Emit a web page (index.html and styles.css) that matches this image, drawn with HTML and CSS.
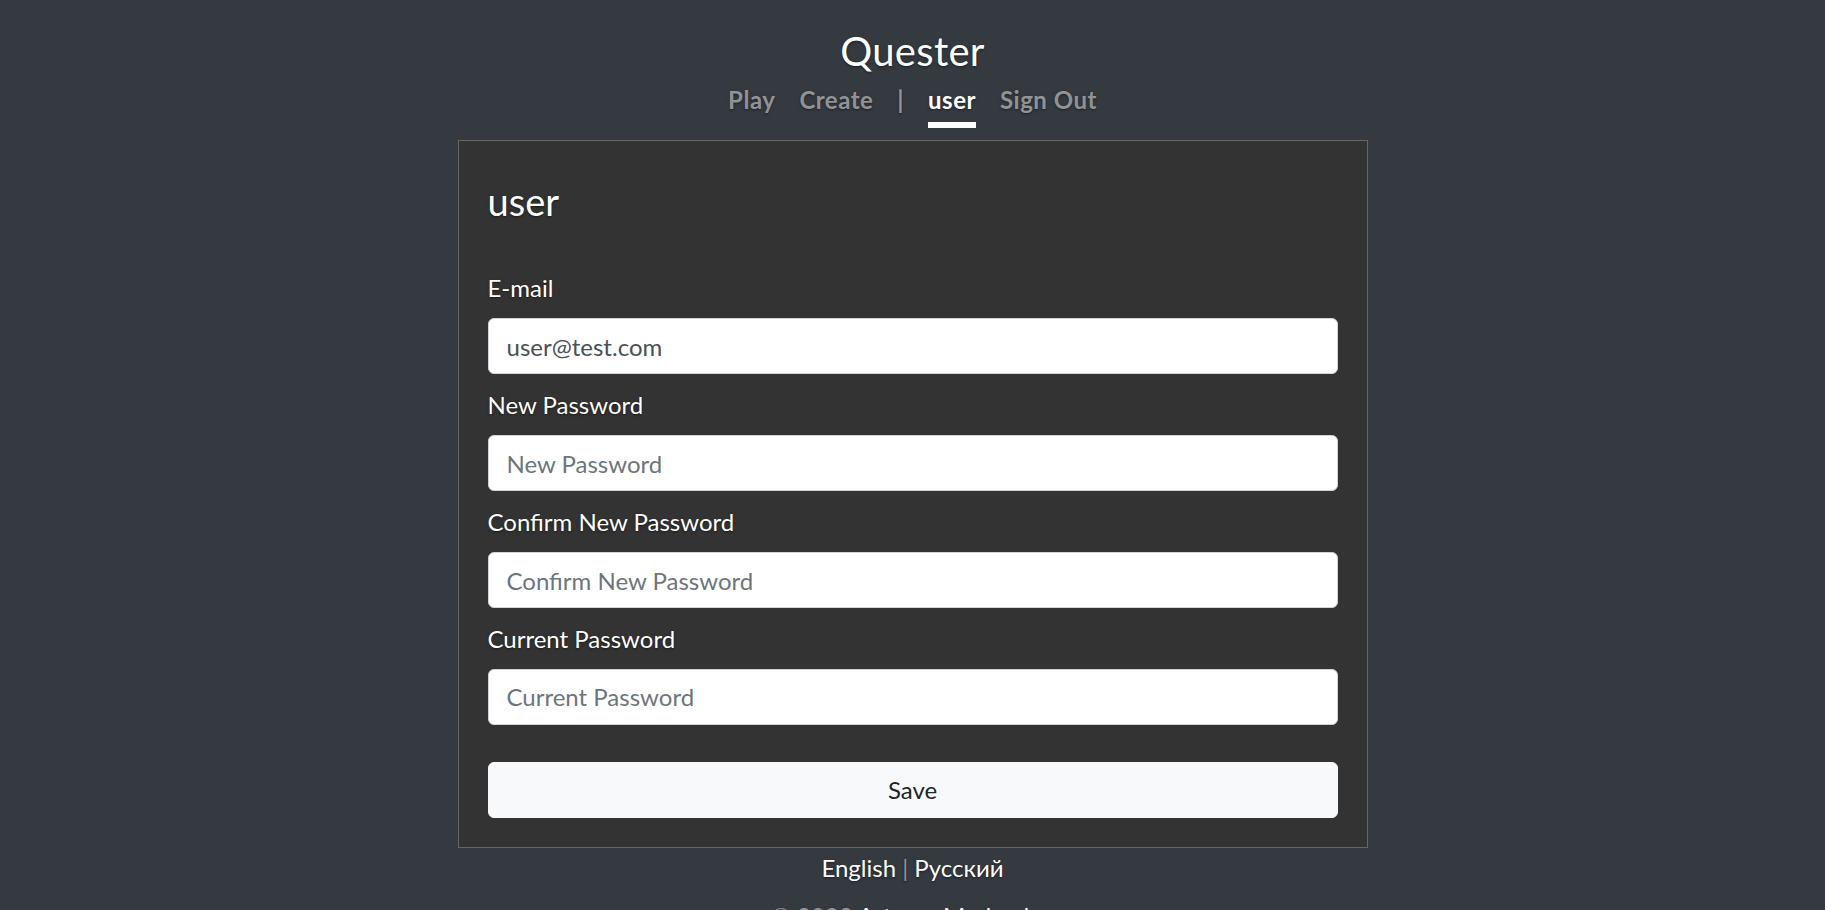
FILE: index.html
```html
<!DOCTYPE html>
<html lang="en">
<head>
<meta charset="utf-8">
<title>Quester</title>
<link rel="stylesheet" href="styles.css">
</head>
<body>
<div class="cover">
  <header class="masthead">
    <h1 class="brand">Quester</h1>
    <nav class="nav">
      <a class="nav-link" href="#">Play</a>
      <a class="nav-link" href="#">Create</a>
      <span class="nav-link sep">|</span>
      <a class="nav-link active" href="#">user</a>
      <a class="nav-link" href="#">Sign Out</a>
    </nav>
  </header>
  <main class="card">
    <h2 class="card-title">user</h2>
    <form class="form">
      <div class="group">
        <label class="label" for="email">E-mail</label>
        <input class="control" id="email" type="email" value="user@test.com">
      </div>
      <div class="group">
        <label class="label" for="newpw">New Password</label>
        <input class="control" id="newpw" type="password" placeholder="New Password">
      </div>
      <div class="group">
        <label class="label" for="confpw">Confirm New Password</label>
        <input class="control" id="confpw" type="password" placeholder="Confirm New Password">
      </div>
      <div class="group">
        <label class="label" for="curpw">Current Password</label>
        <input class="control" id="curpw" type="password" placeholder="Current Password">
      </div>
      <button class="btn" type="button">Save</button>
    </form>
  </main>
  <footer class="footer">
    <p class="lang"><a href="#">English</a> <span class="bar">|</span> <a href="#">Русский</a></p>
    <p class="copy"><span class="muted">© 2023</span> <a href="#">Artyom Medvedev</a></p>
  </footer>
</div>
</body>
</html>
```

FILE: styles.css
```css
html, body {
  margin: 0;
  padding: 0;
}
body {
  background: #343a40;
  color: #fff;
  font-family: Lato, "Open Sans", "DejaVu Sans", sans-serif;
  font-size: 24px;
  line-height: 1.5;
  text-shadow: 0 1.2px 2.4px rgba(0, 0, 0, 0.5);
  overflow: hidden;
}
.cover {
  display: flex;
  flex-direction: column;
  align-items: center;
}
.masthead {
  display: flex;
  flex-direction: column;
  align-items: center;
  padding-top: 27px;
}
.brand {
  margin: 0;
  font-size: 40px;
  line-height: 48px;
  font-weight: 400;
  letter-spacing: 0.3px;
}
.nav {
  display: flex;
  gap: 24px;
  margin-top: -1px;
}
.nav-link {
  display: block;
  padding: 8px 0 4px;
  line-height: 36px;
  font-weight: 700;
  letter-spacing: 0.5px;
  color: rgba(255, 255, 255, 0.5);
  text-decoration: none;
  border-bottom: 6px solid transparent;
}
.nav-link.active {
  color: #fff;
  border-bottom-color: #fff;
}
.card {
  box-sizing: border-box;
  width: 910px;
  margin-top: 12px;
  padding: 29px;
  background: #333;
  border: 1px solid rgba(255, 255, 255, 0.25);
}
.card-title {
  margin: 6px 0 44px;
  font-size: 38px;
  line-height: 50.4px;
  font-weight: 400;
}
.form {
  display: flex;
  flex-direction: column;
}
.group {
  display: flex;
  flex-direction: column;
  margin-bottom: 12.8px;
}
.label {
  line-height: 36px;
  margin-bottom: 12px;
}
.control {
  box-sizing: border-box;
  height: 56px;
  padding: 9px 18px;
  font-family: inherit;
  font-size: 24px;
  line-height: 36px;
  color: #495057;
  background: #fff;
  border: 1px solid #ced4da;
  border-radius: 6px;
  outline: none;
}
.control::placeholder {
  color: #6c757d;
}
.btn {
  margin-top: 24.5px;
  height: 56px;
  padding: 9px 18px;
  font-family: inherit;
  font-size: 24px;
  line-height: 36px;
  color: #212529;
  background: #f8f9fa;
  border: 1px solid #f8f9fa;
  border-radius: 6px;
  text-shadow: none;
}
.footer {
  display: flex;
  flex-direction: column;
  align-items: center;
  margin-top: 2px;
}
.footer p {
  margin: 0;
  line-height: 36px;
}
.footer a {
  color: #fff;
  text-decoration: none;
}
.lang .bar {
  color: rgba(255, 255, 255, 0.5);
}
.copy {
  margin-top: 12px !important;
}
.muted {
  color: rgba(255, 255, 255, 0.5);
}
```
